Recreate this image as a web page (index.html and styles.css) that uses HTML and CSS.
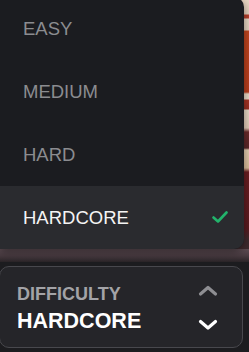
FILE: index.html
```html
<!DOCTYPE html>
<html>
<head>
<meta charset="utf-8">
<link rel="stylesheet" href="styles.css">
</head>
<body>
<div class="scene">
  <ul class="menu">
    <li class="item">EASY</li>
    <li class="item">MEDIUM</li>
    <li class="item">HARD</li>
    <li class="item selected">HARDCORE
      <svg class="check" width="16" height="13" viewBox="0 0 16 13"><path d="M1.5 6.5 L6 10.5 L14.5 1.5" fill="none" stroke="#22b36b" stroke-width="2.6" stroke-linecap="round" stroke-linejoin="round"/></svg>
    </li>
  </ul>
  <div class="shade"></div>
</div>
<div class="footer">
  <div class="select">
    <div class="texts">
      <div class="label">DIFFICULTY</div>
      <div class="value">HARDCORE</div>
    </div>
    <svg class="arrows" width="20" height="48" viewBox="0 0 20 48"><path d="M2.5 10 L10 3.5 L17.5 10" fill="none" stroke="#8e8e92" stroke-width="3.2" stroke-linecap="round" stroke-linejoin="round"/><path d="M2.5 37.5 L10 44 L17.5 37.5" fill="none" stroke="#ffffff" stroke-width="3.2" stroke-linecap="round" stroke-linejoin="round"/></svg>
  </div>
</div>
</body>
</html>
```

FILE: styles.css
```css
html, body {
  margin: 0;
  padding: 0;
}
body {
  width: 249px;
  height: 352px;
  overflow: hidden;
  background: #1c1c1f;
  font-family: "Liberation Sans", Arial, sans-serif;
}
.scene {
  height: 262px;
  display: flex;
  flex-direction: column;
  background: linear-gradient(180deg,
    #e9d7c4 0px, #e5d0bb 14px, #b8402c 15px, #b8402c 18px,
    #eadbc8 19px, #e6d3bf 30px, #c2461f 31px, #b93d1c 92px,
    #ecdcc8 94px, #ecdcc8 99px, #a83526 100px, #9b2f22 109px,
    #eadcc9 110px, #e4cdb8 128px, #6b2a2a 132px, #5a2628 148px,
    #e6cfb3 150px, #ddbf9b 168px, #6a1e22 172px, #5a1a20 228px,
    #3e2a2e 240px, #3e2a2e 262px);
}
.menu {
  list-style: none;
  margin: -3px 0 0 0;
  padding: 0;
  width: 244px;
  background: #1b1c20;
  border-radius: 0 10px 10px 0;
  overflow: hidden;
  box-shadow: 0 3px 10px rgba(0, 0, 0, 0.45);
  position: relative;
  z-index: 1;
}
.item {
  height: 63px;
  display: flex;
  align-items: center;
  justify-content: space-between;
  padding: 0 16px 0 23px;
  font-size: 18.5px;
  line-height: 20px;
  color: #8b8c90;
}
.item.selected {
  background: #2a2b2f;
  color: #f4f4f4;
}
.check {
  display: block;
  margin-top: -1px;
}
.shade {
  flex: 1;
  background: linear-gradient(180deg, #5e4d54 0%, #4a3c42 50%, #2a2427 100%);
}
.footer {
  padding: 4px 6px 4px 0;
}
.select {
  box-sizing: border-box;
  height: 82px;
  margin-left: -1px;
  border: 1px solid #48484d;
  border-radius: 10px;
  background: #252529;
  display: flex;
  align-items: center;
  justify-content: space-between;
  padding: 0 24px 0 17px;
}
.texts {
  display: flex;
  flex-direction: column;
  margin-top: 2px;
}
.label {
  font-size: 18px;
  font-weight: bold;
  line-height: 20px;
  color: #a3a3a7;
}
.value {
  margin-top: 5px;
  font-size: 21.5px;
  font-weight: bold;
  line-height: 24px;
  color: #ffffff;
}
.arrows {
  display: block;
  margin-top: 2px;
}
```
